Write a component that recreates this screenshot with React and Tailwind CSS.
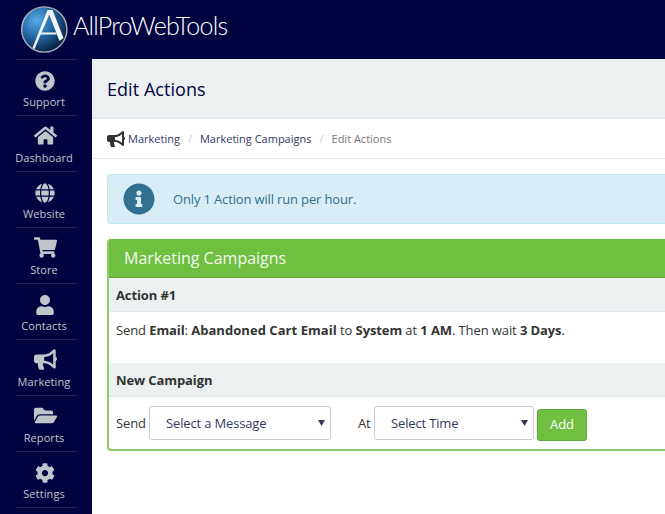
import React from "react";
import {
  FaQuestionCircle,
  FaHome,
  FaGlobe,
  FaShoppingCart,
  FaUser,
  FaBullhorn,
  FaFolderOpen,
  FaCog,
  FaInfoCircle,
} from "react-icons/fa";

const navItems = [
  { label: "Support", icon: FaQuestionCircle, size: "text-[20px]" },
  { label: "Dashboard", icon: FaHome, size: "text-[23px]" },
  { label: "Website", icon: FaGlobe, size: "text-[20px]" },
  { label: "Store", icon: FaShoppingCart, size: "text-[23px]" },
  { label: "Contacts", icon: FaUser, size: "text-[20px]" },
  { label: "Marketing", icon: FaBullhorn, size: "text-[23px]" },
  { label: "Reports", icon: FaFolderOpen, size: "text-[23px]" },
  { label: "Settings", icon: FaCog, size: "text-[20px]" },
];

function Logo() {
  return (
    <svg width="48" height="48" viewBox="0 0 48 48">
      <defs>
        <radialGradient id="ball" cx="33%" cy="30%" r="75%">
          <stop offset="0%" stopColor="#55ade6" />
          <stop offset="55%" stopColor="#1f5f9c" />
          <stop offset="100%" stopColor="#0a1d3c" />
        </radialGradient>
      </defs>
      <circle cx="24.3" cy="24.5" r="22.6" fill="url(#ball)" stroke="#aab2bb" strokeWidth="1.4" />
      <path d="M27.5 5 L29.5 9 L14.5 44 L12.5 43 Z" fill="#f2f4f6" />
      <path d="M27.5 5 L32.5 5 L43.5 33 L39.5 36 Z" fill="#f2f4f6" />
      <path d="M21.5 27.5 L36 27.5 L36.8 29.5 L20.6 29.5 Z" fill="#f2f4f6" />
    </svg>
  );
}

function Sidebar() {
  return (
    <div className="w-[92px] shrink-0 px-[15px]">
      {navItems.map(({ label, icon: Icon, size }) => (
        <div
          key={label}
          className="flex h-[56px] flex-col items-center border-t border-[#1b2050] text-[#c0c5cc]"
        >
          <div className={`mr-[2px] flex h-[31px] items-end ${size}`}>
            <Icon />
          </div>
          <div className="mr-[4px] mt-[2px] whitespace-nowrap text-[11px] leading-[17px] tracking-[0.1px]">{label}</div>
        </div>
      ))}
      <div className="border-t border-[#1b2050]" />
    </div>
  );
}

function SelectBox({ label, width }) {
  return (
    <div
      className={`relative flex h-[34px] items-center rounded-[3px] border border-[#cccccc] bg-white pl-4 pt-[2px] text-[13px] tracking-[-0.15px] text-[#34385f] ${width}`}
    >
      {label}
      <svg className="absolute right-[5px] top-[13px]" width="7" height="6" viewBox="0 0 7 6">
        <path d="M0 0 H7 L3.5 6 Z" fill="#34385f" />
      </svg>
    </div>
  );
}

export default function App() {
  return (
    <div
      className="h-[514px] w-[665px] overflow-hidden bg-[#00033f]"
      style={{ fontFamily: '"Open Sans", sans-serif' }}
    >
      <div className="flex h-[59px] items-center pb-[2px] pl-[20px]">
        <Logo />
        <span
          className="mb-[5px] ml-[5px] text-[25px] font-light tracking-[-0.8px] text-white"
          style={{ fontFamily: "Lato, sans-serif" }}
        >
          AllProWebTools
        </span>
      </div>
      <div className="flex h-[455px]">
        <Sidebar />
        <div className="w-[600px] shrink-0 bg-white">
          <div className="flex h-[60px] items-center border-b border-[#e1e5e9] bg-[#ecf0f1] pl-[15px] pt-[2px] text-[18px] tracking-[0.05px] text-[#00033f]">
            Edit Actions
          </div>
          <div className="flex h-[40px] items-center border-b border-[#e4e7ea] pl-[15px] pt-[1px] text-[11px]">
            <FaBullhorn className="mr-[3px] text-[18px] text-[#333333]" />
            <span className="text-[#34385f]">Marketing</span>
            <span className="mx-[8px] text-[#cccccc]">/</span>
            <span className="text-[#34385f]">Marketing Campaigns</span>
            <span className="mx-[8px] text-[#cccccc]">/</span>
            <span className="text-[#777777]">Edit Actions</span>
          </div>

          <div className="pl-[15px] pt-[15px]">
            <div className="flex h-[50px] items-center rounded-l-[4px] border border-r-0 border-[#bce8f1] bg-[#d9edf7] pl-[15px] text-[#31708f]">
              <FaInfoCircle className="text-[32px]" />
              <span className="ml-[18px] pt-[1px] text-[13px] tracking-[-0.15px]">Only 1 Action will run per hour.</span>
            </div>

            <div className="mt-[15px] h-[212px] rounded-bl-[4px] rounded-tl-[4px] border-b-2 border-l-2 border-[#8acd6a] text-[13px] tracking-[-0.1px] text-[#333333]">
              <div className="flex h-[38px] items-center bg-[#70bf41] pl-[15px] text-[16px] tracking-normal text-[#f2f9ee]">
                Marketing Campaigns
              </div>
              <div className="flex h-[35px] items-center border-b border-[#e1e5e9] border-t border-t-[#5fa836] bg-[#ecf0f1] pl-[7px] pt-[2px] font-bold">
                Action #1
              </div>
              <div className="flex h-[51px] items-start pl-[7px] pt-[9px]">
                <span>
                  Send <b>Email</b>: <b className="tracking-[0.05px]">Abandoned Cart Email</b> to <b>System</b> at{" "}
                  <b>1 AM</b>. Then wait <b>3 Days</b>.
                </span>
              </div>
              <div className="flex h-[34px] items-center border-b border-[#e1e5e9] bg-[#ecf0f1] pl-[7px] pt-[2px] font-bold">
                New Campaign
              </div>
              <div className="flex items-start pl-[7px] pt-[9px]">
                <span className="w-[33px] leading-[34px]">Send</span>
                <SelectBox label="Select a Message" width="w-[182px]" />
                <span className="ml-[27px] w-[16px] leading-[34px]">At</span>
                <SelectBox label="Select Time" width="w-[160px]" />
                <button className="ml-[3px] mt-[3px] h-[32px] w-[50px] rounded-[3px] border border-[#5fa836] bg-[#70bf41] text-[13px] tracking-normal text-white">
                  Add
                </button>
              </div>
            </div>
          </div>
        </div>
      </div>
    </div>
  );
}
